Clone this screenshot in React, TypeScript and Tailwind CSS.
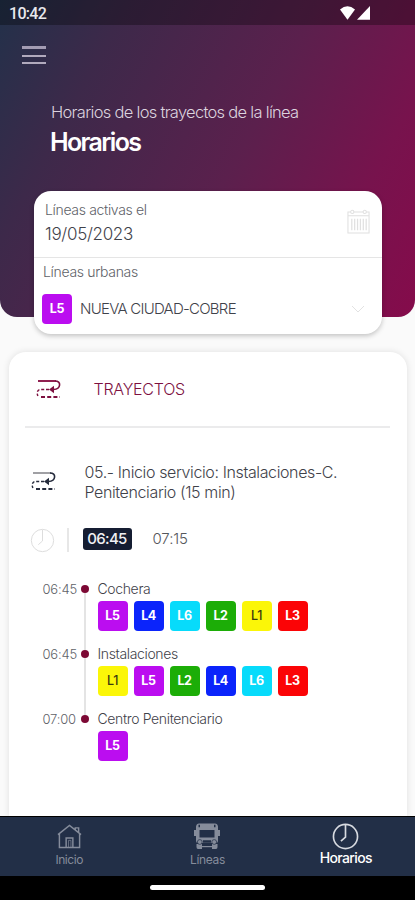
import React from "react";

const COLORS: Record<string, string> = {
  L1: "bg-[#fbf608] text-[#3a3a10] font-medium",
  L2: "bg-[#1cad07] text-white font-bold",
  L3: "bg-[#fb0406] text-white font-bold",
  L4: "bg-[#0b24fb] text-white font-bold",
  L5: "bg-[#bb0df0] text-white font-bold",
  L6: "bg-[#07dbfb] text-white font-bold",
};

function Badge({ line }: { line: string }) {
  return (
    <span className={`flex h-[30px] w-[30px] shrink-0 items-center justify-center rounded-[4px] text-[12.5px] tracking-[-0.4px] ${COLORS[line]}`}>
      {line}
    </span>
  );
}

function RouteIcon({ className, top }: { className: string; top: string }) {
  return (
    <svg viewBox="0 0 26 20" className={`h-5 w-[26px] shrink-0 ${className}`} fill="none" stroke="currentColor">
      <path d="M2 2H20" stroke={top} strokeWidth="1.9" />
      <path d="M19 2C22.3 2 23.8 3.8 23.6 6C23.4 8.3 21.8 10.3 17.5 10.5" strokeWidth="1.6" />
      <path d="M13 10.5L18 6.8V14.2Z" fill="currentColor" stroke="none" />
      <path d="M13 10.5H4C1.3 11 .5 14 1.9 17" strokeWidth="1.4" strokeDasharray="3 1.8" />
      <path d="M5 18H24" strokeWidth="1.9" strokeDasharray="4 2.2" />
    </svg>
  );
}

function ClockIcon({ className }: { className: string }) {
  return (
    <svg viewBox="0 0 26 26" className={className} fill="none" stroke="currentColor">
      <circle cx="13" cy="13" r="11.6" />
      <path d="M13 2V13.5L8.6 17.4" />
    </svg>
  );
}

const STOPS = [
  { time: "06:45", name: "Cochera", lines: ["L5", "L4", "L6", "L2", "L1", "L3"] },
  { time: "06:45", name: "Instalaciones", lines: ["L1", "L5", "L2", "L4", "L6", "L3"] },
  { time: "07:00", name: "Centro Penitenciario", lines: ["L5"] },
];

export default function App() {
  return (
    <div className="flex h-[900px] w-[415px] flex-col overflow-hidden bg-[#fafafa] font-['Inter',sans-serif] font-light text-[#3f424a]">
      <header className="h-[317px] shrink-0 rounded-b-[17px] bg-[linear-gradient(118deg,#22314a_0%,#3d294a_22%,#5b204d_55%,#77134d_80%,#850b4b_100%)] text-white">
        <div className="flex h-[25px] items-center justify-between bg-black/30 pr-[44px] pl-[9px]">
          <span className="pt-[3px] font-['Roboto',sans-serif] text-[16px] font-medium tracking-[-0.7px] text-[#e8e8ec]">10:42</span>
          <svg viewBox="0 0 32 16" className="mt-[1px] h-4 w-8" fill="white">
            <path d="M1 4.5Q8.5-2 16 4.5L8.5 14.7Z" />
            <path d="M31 1V14.7H18Z" />
          </svg>
        </div>
        <div className="mt-[21px] ml-[22px] flex w-6 flex-col gap-[5px]">
          <span className="h-[3px] bg-[#a39cb3]" />
          <span className="mt-[1px] h-[2px] bg-[#b1aabd]" />
          <span className="h-[2px] bg-[#b1aabd]" />
        </div>
        <p className="mt-[38px] ml-[51px] text-[16.5px] leading-5 tracking-[-0.71px] whitespace-nowrap text-[#dcd3df]">
          Horarios de los trayectos de la línea
        </p>
        <h1 className="mt-[5px] ml-[50px] text-[25px] leading-[30px] font-semibold tracking-[-1.65px]">Horarios</h1>
      </header>

      <section className="relative -mt-[126px] ml-[34px] h-[143px] w-[348px] shrink-0 rounded-[17px] bg-white shadow-[0_2px_5px_rgba(0,0,0,0.22)]">
        <div className="flex h-[67px] justify-between border-b border-[#e5e5e5] pr-3 pl-[11px]">
          <div>
            <p className="mt-[10px] text-[14px] leading-[18px] tracking-[-0.33px] text-[#606268]">Líneas activas el</p>
            <p className="mt-[4px] text-[17px] leading-[22px] tracking-[-0.3px]">19/05/2023</p>
          </div>
          <svg viewBox="0 0 24 26" className="mt-[18px] h-[25px] w-[23px]" fill="none" stroke="#e0e0e0" strokeWidth="1.1">
            <path d="M4 3H1V25H23V3H20M7 3H17M1 7H23" />
            <circle cx="5.5" cy="3" r="1.7" />
            <circle cx="18.5" cy="3" r="1.7" />
            <path d="M5 10V22M8 10V22M11 10V22M14 10V22M17 10V22M20 10V22" strokeWidth="1.3" />
          </svg>
        </div>
        <p className="mt-[5px] ml-[9px] text-[14px] leading-[18px] tracking-[-0.32px] text-[#606268]">Líneas urbanas</p>
        <div className="mt-[13px] flex items-center pr-[18px] pl-2">
          <Badge line="L5" />
          <span className="ml-[8px] text-[15px] tracking-[-0.74px] whitespace-nowrap">NUEVA CIUDAD-COBRE</span>
          <svg viewBox="0 0 12 8" className="ml-auto h-2 w-3" fill="none" stroke="#e2e2e2">
            <path d="M0 1L6 7L12 1" />
          </svg>
        </div>
      </section>

      <main className="mx-auto mt-[18px] w-[398px] flex-1 rounded-t-[17px] bg-white pr-[17px] pl-[16px] shadow-[0_0_7px_rgba(0,0,0,0.11)]">
        <div className="flex h-[76px] items-center border-b-2 border-[#ebebec] pl-[11px]">
          <RouteIcon className="text-[#7d103f]" top="#8b1547" />
          <h2 className="ml-[32px] text-[16px] tracking-[-0.25px] text-[#7d103f]">TRAYECTOS</h2>
        </div>
        <div className="mt-[34px] flex items-start pl-[6px]">
          <RouteIcon className="mt-[9px] text-[#252b3c]" top="#9b9ba0" />
          <p className="ml-[28px] text-[16px] leading-[20px] tracking-[-0.38px] whitespace-nowrap">
            05.- Inicio servicio: Instalaciones-C.
            <br />
            Penitenciario (15 min)
          </p>
        </div>
        <div className="mt-[26px] flex h-[26px] items-start pl-[5px]">
          <ClockIcon className="h-[25px] w-[25px] text-[#dcdcdc]" />
          <span className="ml-[12px] h-6 w-[2px] bg-[#e7e7e7]" />
          <span className="ml-[14px] flex h-[22px] w-[49px] items-center justify-center rounded-[3px] bg-[#151d32] text-[15px] font-medium tracking-[-0.7px] text-[#f0f0f4]">06:45</span>
          <span className="ml-[21px] text-[15px] leading-[22px] tracking-[-0.1px] text-[#55575c]">07:15</span>
        </div>
        <ol className="mt-[25px] pl-[18px]">
          {STOPS.map((stop, i) => (
            <li key={i} className="flex h-[65px]">
              <time className="w-[38px] text-[13px] leading-[20px] tracking-[-0.2px] text-[#606268]">{stop.time}</time>
              <div className="flex w-[9px] flex-col items-center">
                <span className="mt-[6px] h-[8px] w-[8px] shrink-0 rounded-full bg-[#7c0834]" />
                {i < STOPS.length - 1 && <span className="-mb-[6px] w-[2px] flex-1 bg-[#e4e4e4]" />}
              </div>
              <div className="ml-[8px]">
                <p className="text-[14px] leading-[20px] tracking-[-0.36px] whitespace-nowrap">{stop.name}</p>
                <div className="mt-[2px] flex gap-[6px]">
                  {stop.lines.map((line) => <Badge key={line} line={line} />)}
                </div>
              </div>
            </li>
          ))}
        </ol>
      </main>

      <nav className="relative grid h-[60px] shrink-0 grid-cols-3 border-t border-black bg-[#222f47] text-[12px] text-[#858c9b]">
        <a className="flex flex-col items-center pt-[7px]">
          <svg viewBox="0 0 26 26" className="h-[25px] w-[25px]" fill="none" stroke="currentColor" strokeWidth="1.5">
            <path d="M1 11L13 1.5L25 11M2.5 10V24.5H23.5V10M19 6V4H22.5V9M9.5 24V14.5H16.5V24" />
            <path d="M12 24V17H14.5V24" strokeWidth=".7" />
          </svg>
          <span className="mt-[2px] leading-[18px] font-normal tracking-[-0.45px]">Inicio</span>
        </a>
        <a className="flex flex-col items-center pt-[6px]">
          <svg viewBox="0 0 26 26" className="h-[26px] w-[26px]" fill="currentColor">
            <path fillRule="evenodd" d="M5 .5H21Q23.5 .5 24 3.5V18Q24 20 22 20H4Q2 20 2 18V3.5Q2.5 .5 5 .5ZM5.5 7V14.5H20.5V7Z" />
            <path d="M0 7H2V13H0ZM24 7H26V13H24ZM2.5 21H8V26H4Q2.5 26 2.5 24ZM18 21H23.5V24Q23.5 26 22 26H18Z" />
            <path d="M8 23H18V24.2H8Z" />
            <path d="M4.5 3H6M20 3H21.5M9 18.5H17" stroke="#222f47" strokeWidth="2.4" />
            <circle cx="5.8" cy="19" r="2.4" stroke="#222f47" strokeWidth=".7" />
            <circle cx="20.2" cy="19" r="2.4" stroke="#222f47" strokeWidth=".7" />
          </svg>
          <span className="mt-[2px] leading-[18px] font-normal tracking-[-0.35px]">Líneas</span>
        </a>
        <a className="flex flex-col items-center pt-[6px] text-white">
          <ClockIcon className="h-[27px] w-[27px] stroke-[1.6] text-[#d7dae0]" />
          <span className="-mt-px text-[14px] leading-[18px] font-medium tracking-[-0.65px]">Horarios</span>
        </a>
      </nav>
      <footer className="flex h-6 shrink-0 justify-center bg-black pt-[9px]">
        <span className="h-[5px] w-[115px] rounded-full bg-white" />
      </footer>
    </div>
  );
}
